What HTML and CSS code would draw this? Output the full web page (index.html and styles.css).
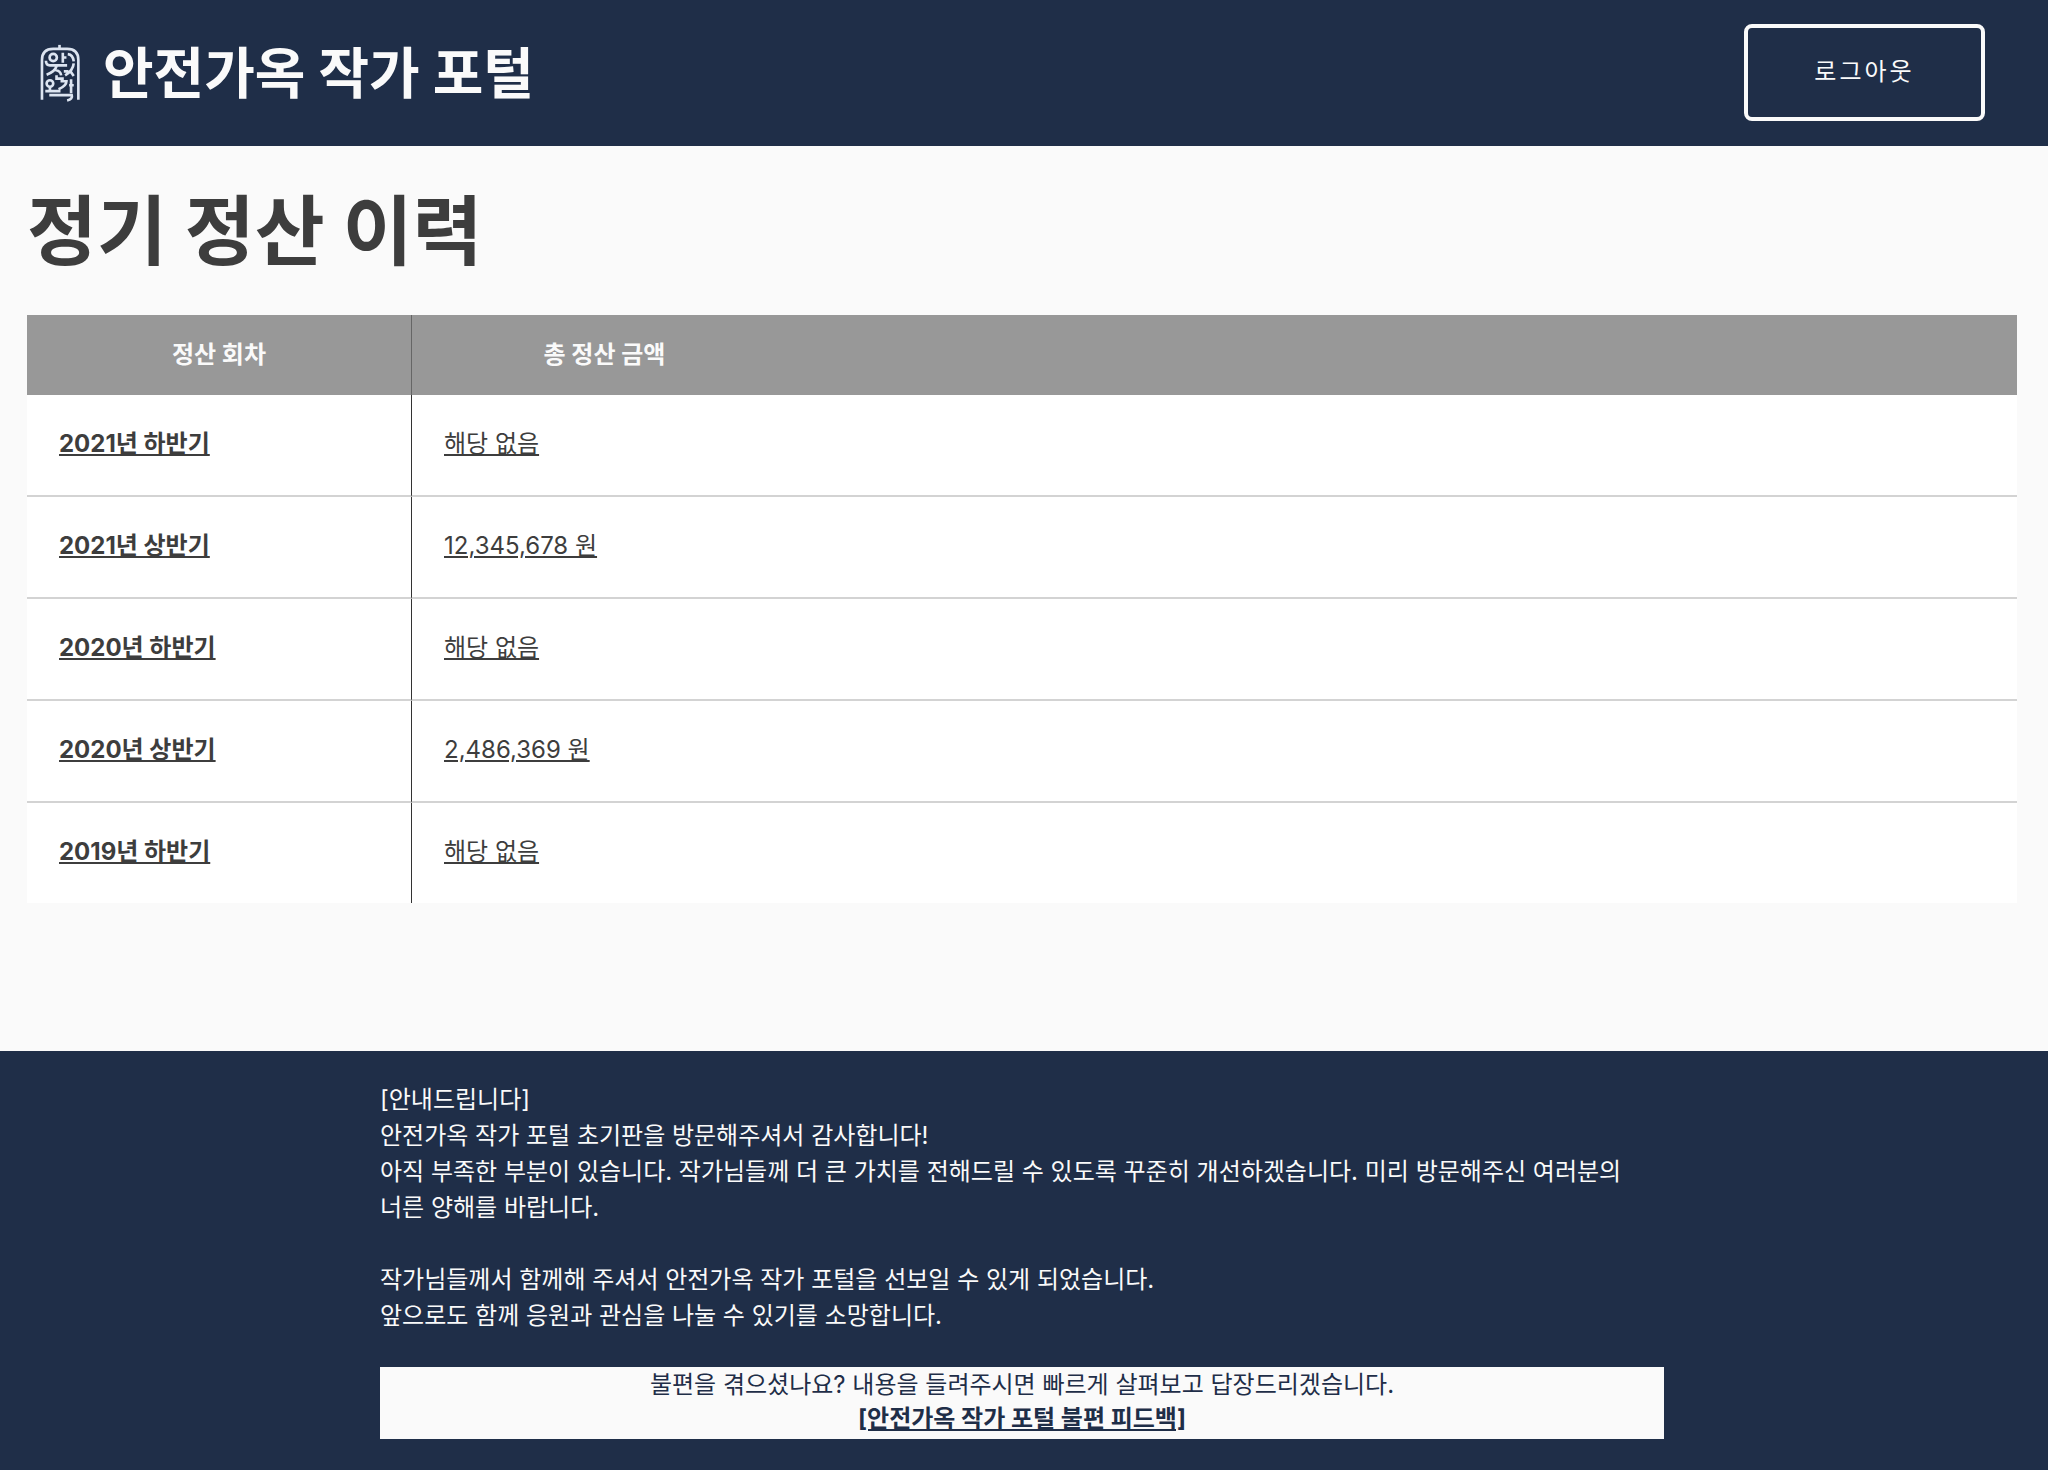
FILE: index.html
```html
<!DOCTYPE html>
<html lang="ko">
<head>
  <meta charset="UTF-8" />
  <meta name="viewport" content="width=device-width, initial-scale=1.0" />
  <title>안전가옥 작가 포털</title>
  <link rel="stylesheet" href="styles.css">
</head>
<body>
  <header class="header">
    <a class="brand" href="/">
      <svg class="logo" viewBox="62 42 124 174" aria-hidden="true">
        <path d="M68 210V90Q68 56 102 56H144Q178 56 178 90V210" />
        <path d="M121 44V56" />
        <circle cx="102" cy="82" r="11" />
        <path d="M131 68V98M131 82H142M146 72Q162 74 164 94" />
        <path d="M80 92Q80 106 92 106H144M112 108Q108 124 82 134M108 120Q124 122 126 136M134 124H148M164 100Q162 122 138 136M154 124L164 138" />
        <path d="M112 136V146H134" />
        <circle cx="92" cy="161" r="10" />
        <path d="M92 172V182M78 184H124M124 154H142Q142 168 118 178M156 148V190M150 166H164" />
        <path d="M90 196H158Q162 208 144 212" />
      </svg>
      <span class="brand-name">안전가옥 작가 포털</span>
    </a>
    <button class="logout" type="button">로그아웃</button>
  </header>

  <main class="content">
    <h1>정기 정산 이력</h1>
    <table class="history">
      <thead>
        <tr>
          <th class="term">정산 회차</th>
          <th class="amount">총 정산 금액</th>
          <th></th>
        </tr>
      </thead>
      <tbody>
        <tr>
          <td><a class="term-link" href="#">2021년 하반기</a></td>
          <td><a href="#">해당 없음</a></td>
          <td></td>
        </tr>
        <tr>
          <td><a class="term-link" href="#">2021년 상반기</a></td>
          <td><a href="#">12,345,678 원</a></td>
          <td></td>
        </tr>
        <tr>
          <td><a class="term-link" href="#">2020년 하반기</a></td>
          <td><a href="#">해당 없음</a></td>
          <td></td>
        </tr>
        <tr>
          <td><a class="term-link" href="#">2020년 상반기</a></td>
          <td><a href="#">2,486,369 원</a></td>
          <td></td>
        </tr>
        <tr>
          <td><a class="term-link" href="#">2019년 하반기</a></td>
          <td><a href="#">해당 없음</a></td>
          <td></td>
        </tr>
      </tbody>
    </table>
  </main>

  <footer class="footer">
    <div class="notice">
      <p>
        [안내드립니다]<br>
        안전가옥 작가 포털 초기판을 방문해주셔서 감사합니다!<br>
        아직 부족한 부분이 있습니다. 작가님들께 더 큰 가치를 전해드릴 수 있도록 꾸준히 개선하겠습니다. 미리 방문해주신 여러분의 너른 양해를 바랍니다.
      </p>
      <p>
        작가님들께서 함께해 주셔서 안전가옥 작가 포털을 선보일 수 있게 되었습니다.<br>
        앞으로도 함께 응원과 관심을 나눌 수 있기를 소망합니다.
      </p>
      <div class="feedback">
        불편을 겪으셨나요? 내용을 들려주시면 빠르게 살펴보고 답장드리겠습니다.<br>
        <a href="#">[안전가옥 작가 포털 불편 피드백]</a>
      </div>
    </div>
  </footer>
</body>
</html>
```
FILE: styles.css
```css
* {
  box-sizing: border-box;
}

body {
  margin: 0;
  min-height: 100vh;
  display: flex;
  flex-direction: column;
  font-family: Inter, "Noto Sans CJK KR", sans-serif;
  font-size: 24px;
  line-height: 36px;
  color: #3d3d3d;
  background-color: #fafafa;
  word-break: keep-all;
}

.header {
  display: flex;
  justify-content: space-between;
  align-items: center;
  padding: 24px 63px 25px 40px;
  background-color: #1f2e48;
}

.brand {
  display: flex;
  align-items: center;
  gap: 22px;
  color: #fafafa;
  text-decoration: none;
}

.logo {
  width: 41px;
  height: 58px;
  fill: none;
  stroke: #dce4f0;
  stroke-width: 8;
}

.brand-name {
  font-size: 55px;
  line-height: 72px;
  font-weight: bold;
}

.logout {
  width: 241px;
  height: 97px;
  padding: 0 0 6px;
  border: 4px solid #fafafa;
  border-radius: 8px;
  background-color: transparent;
  color: #fafafa;
  font-family: inherit;
  font-size: 24px;
  letter-spacing: 3px;
  cursor: pointer;
}

.content {
  flex: 1;
  padding: 33px 31px 0 27px;
}

h1 {
  margin: 0 0 32px;
  font-size: 76px;
  line-height: 104px;
}

.history {
  width: 100%;
  table-layout: fixed;
  border-collapse: separate;
  border-spacing: 0;
  background-color: #fff;
}

.history th {
  height: 80px;
  padding: 0 32px;
  background-color: #989898;
  color: #fafafa;
  font-weight: bold;
}

.history td {
  height: 102px;
  padding: 0 32px 2px;
  border-bottom: 2px solid #d3d3d3;
}

.history tr:last-child td {
  height: 100px;
  border-bottom: none;
}

.history th:first-child {
  border-right: 1px solid #666;
}

.history td:first-child {
  border-right: 1px solid #333;
}

.term,
.amount {
  width: 385px;
}

.history a {
  color: #3d3d3d;
}

.history .term-link {
  font-weight: bold;
}

.footer {
  padding: 31px 384px 31px 380px;
  background-color: #1f2e48;
  color: #fafafa;
}

.notice p {
  margin: 0 0 36px;
}

.notice p:last-of-type {
  margin-bottom: 33px;
}

.feedback {
  padding: 1px 0 3px;
  background-color: #fafafa;
  color: #1f2e48;
  line-height: 34px;
  text-align: center;
}

.feedback a {
  color: #1f2e48;
  font-weight: bold;
}
```
